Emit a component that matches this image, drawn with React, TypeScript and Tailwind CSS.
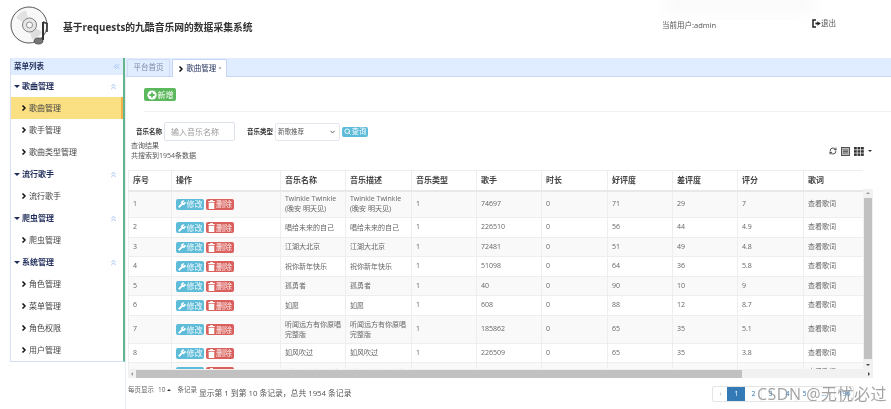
import { ChevronRight, ChevronsLeft, ChevronsUp, RefreshCw, Search, Wrench } from "lucide-react";

const menu = [
  { title: "歌曲管理", items: ["歌曲管理", "歌手管理", "歌曲类型管理"] },
  { title: "流行歌手", items: ["流行歌手"] },
  { title: "爬虫管理", items: ["爬虫管理"] },
  { title: "系统管理", items: ["角色管理", "菜单管理", "角色权限", "用户管理"] },
];

const columns = [
  { label: "序号", width: 43 },
  { label: "操作", width: 109 },
  { label: "音乐名称", width: 65 },
  { label: "音乐描述", width: 66 },
  { label: "音乐类型", width: 65 },
  { label: "歌手", width: 65 },
  { label: "时长", width: 66 },
  { label: "好评度", width: 65 },
  { label: "差评度", width: 65 },
  { label: "评分", width: 66 },
  { label: "歌词", width: 60 },
];

const rows = [
  { name: "Twinkle Twinkle (晚安 明天见)", singer: "74697", good: 71, bad: 29, score: "7", height: "h-[27px]" },
  { name: "唱给未来的自己", singer: "226510", good: 56, bad: 44, score: "4.9", height: "h-[20px]" },
  { name: "江湖大北京", singer: "72481", good: 51, bad: 49, score: "4.8", height: "h-[19px]" },
  { name: "祝你新年快乐", singer: "51098", good: 64, bad: 36, score: "5.8", height: "h-[20px]" },
  { name: "孤勇者", singer: "40", good: 90, bad: 10, score: "9", height: "h-[19px]" },
  { name: "如愿", singer: "608", good: 88, bad: 12, score: "8.7", height: "h-[20px]" },
  { name: "听闻远方有你原唱完整版", singer: "185862", good: 65, bad: 35, score: "5.1", height: "h-[28px]" },
  { name: "如风吹过", singer: "226509", good: 65, bad: 35, score: "3.8", height: "h-[19px]" },
  { name: "听闻远方有你女版", singer: "214757", good: 60, bad: 40, score: "6", height: "h-[20px]" },
];

const Logo = () => (
  <svg width="42" height="44" viewBox="0 0 42 44" fill="none">
    <circle cx="19" cy="21" r="18" fill="#f8f8f8" stroke="#444" strokeWidth="0.9" />
    <path d="M6 14 A15 15 0 0 1 16 6.5 L18 14 A7 7 0 0 0 12.5 18 Z" fill="#e2e2e2" />
    <path d="M32 28 A15 15 0 0 1 22 35.5 L20 28 A7 7 0 0 0 25.5 24 Z" fill="#dedede" />
    <circle cx="19.5" cy="21" r="7" fill="#e6e6e6" stroke="#666" strokeWidth="0.8" />
    <circle cx="19.5" cy="21" r="3" fill="#fafafa" stroke="#666" strokeWidth="0.7" />
    <path d="M33 18 V36" stroke="#333" strokeWidth="2" />
    <path d="M33 18 L37 19.5 V28" stroke="#333" strokeWidth="1.6" />
    <ellipse cx="28.5" cy="37" rx="4.4" ry="3" fill="#777" stroke="#333" strokeWidth="0.7" />
  </svg>
);

const PlusCircle = () => (
  <svg width="10" height="10" viewBox="0 0 10 10">
    <circle cx="5" cy="5" r="4.6" fill="#fff" />
    <path d="M5 2.4 V7.6 M2.4 5 H7.6" stroke="#5cb85c" strokeWidth="1.8" />
  </svg>
);

const TrashIcon = () => (
  <svg width="7" height="9" viewBox="0 0 7 9" fill="#fff">
    <path d="M2.2 0 H4.8 V1 H6.8 V2.1 H0.2 V1 H2.2 Z" />
    <path d="M0.7 2.7 H6.3 V9 H0.7 Z" />
  </svg>
);

const LogoutIcon = () => (
  <svg width="9" height="9" viewBox="0 0 9 9" fill="none" stroke="#222">
    <path d="M4 1 H1 V8 H4" strokeWidth="1.5" />
    <path d="M3.4 4.5 H6" strokeWidth="1.8" />
    <path d="M5.5 2.4 L8.6 4.5 L5.5 6.6 Z" fill="#222" strokeWidth="0.2" />
  </svg>
);

const CardIcon = () => (
  <svg width="9" height="9" viewBox="0 0 9 9" fill="#bbb" stroke="#444">
    <rect x="0.5" y="0.5" width="8" height="8" strokeWidth="0.9" />
    <path d="M2 3 H7 M2 4.5 H7 M2 6 H7" strokeWidth="0.7" />
  </svg>
);

const GridIcon = () => (
  <svg width="10" height="9" viewBox="0 0 10 9" fill="#333">
    {[0, 3.5, 7].map((x) =>
      [0, 3.2, 6.4].map((y) => <rect key={`${x}-${y}`} x={x} y={y} width="2.8" height="2.5" />),
    )}
  </svg>
);

const RowActions = () => (
  <div className="flex items-center gap-[2px]">
    <span className="flex h-[11px] w-[28px] items-center justify-center gap-[1px] rounded-[2px] bg-[#5fbcd9] text-[8px] leading-none text-white/90">
      <Wrench size={8} fill="#fff" color="#fff" strokeWidth={2} />
      修改
    </span>
    <span className="flex h-[11px] w-[28px] items-center justify-center gap-[1px] rounded-[2px] bg-[#d9605c] text-[8px] leading-none text-white/90">
      <TrashIcon />
      删除
    </span>
  </div>
);

const Sidebar = () => (
  <aside className="ml-[10px] h-[304px] w-[115px] shrink-0 border-r-2 border-l border-b border-r-[#62b58c] border-l-[#d5e0f5] border-b-[#d5e0f5] bg-white">
    <div className="flex h-[17px] items-center justify-between bg-[#e0ecff] pr-[2px] pl-[3px] text-[7.5px] font-bold text-[#1f2d5a]">
      菜单列表
      <ChevronsLeft size={9} color="#8fb4ee" strokeWidth={2.2} />
    </div>
    {menu.map((group) => (
      <div key={group.title}>
        <div className="flex h-[22px] items-center justify-between pr-[5px] pl-[3px] text-[8px] font-bold text-[#1f2d5a]">
          <span className="flex items-center gap-[2px]">
            <span className="h-0 w-0 border-x-[3.5px] border-t-[3.5px] border-x-transparent border-t-[#1f2d5a]" />
            {group.title}
          </span>
          <ChevronsUp size={9} color="#8fb4ee" strokeWidth={2.2} />
        </div>
        {group.items.map((item, index) => {
          const active = group.title === "歌曲管理" && index === 0;
          return (
            <div
              key={item}
              className={`flex h-[22px] items-center gap-[1px] pl-[9px] text-[8px] text-[#444] ${
                active ? "border-r-2 border-r-[#f4b04a] bg-[#fbe083]" : ""
              }`}
            >
              <ChevronRight size={8} color="#111" strokeWidth={5} />
              {item}
            </div>
          );
        })}
      </div>
    ))}
  </aside>
);

const Tabs = () => (
  <div className="flex h-[19px] shrink-0 items-end gap-[2px] border-b border-[#c5d5f2] bg-[#e0ecff] pl-[1px]">
    <div className="flex h-[17px] w-[43px] items-center justify-center rounded-t-[2px] border border-b-0 border-[#d0dcf5] text-[7.5px] text-[#7d8aa5]">
      平台首页
    </div>
    <div className="-mb-px flex h-[18px] w-[55px] items-center justify-center gap-[1px] rounded-t-[2px] border border-b-0 border-[#c5d5f2] bg-white text-[7.5px] text-[#1f2d5a]">
      <ChevronRight size={8} color="#111" strokeWidth={5} />
      歌曲管理
      <span className="ml-[1px] text-[6px] text-[#777]">×</span>
    </div>
  </div>
);

const SearchForm = () => (
  <div className="flex h-[19px] items-center pl-[10px] text-[6.5px] text-[#333]">
    <span className="w-[28px] font-bold">音乐名称</span>
    <span className="flex h-[19px] w-[71px] items-center rounded-[2px] border border-[#dde3ea] pl-[6px] text-[8px] text-[#999]">
      输入音乐名称
    </span>
    <span className="ml-[12px] w-[28px] font-bold">音乐类型</span>
    <span className="flex h-[18px] w-[65px] items-center justify-between rounded-[2px] border border-[#e4e8ee] pr-[4px] pl-[2px] text-[6.5px] text-[#555]">
      新歌推荐
      <svg width="5" height="4" viewBox="0 0 5 4" fill="none" stroke="#444">
        <path d="M0.5 0.8 L2.5 3 L4.5 0.8" strokeWidth="0.8" />
      </svg>
    </span>
    <span className="ml-[2px] flex h-[10px] w-[26px] items-center justify-center gap-[1px] rounded-[2px] bg-[#5fbcd9] text-[7.5px] text-white/90">
      <Search size={7} color="#fff" strokeWidth={3} />
      查询
    </span>
  </div>
);

const DataTable = () => (
  <div className="mt-[9px] ml-[2px] flex h-[208px] w-[745px] flex-col">
    <div className="flex h-[199px]">
      <div className="h-full w-[735px] overflow-hidden">
        <table className="w-[735px] table-fixed border-collapse text-left text-[7px] text-[#666]">
          <colgroup>
            {columns.map((col) => (
              <col key={col.label} width={col.width} />
            ))}
          </colgroup>
          <thead>
            <tr className="h-[20px] border-b-2 border-[#e8e8e8]">
              {columns.map((col) => (
                <th key={col.label} className="border-x border-t border-[#eee] pl-[4px] text-[8px] font-bold text-[#444]">
                  {col.label}
                </th>
              ))}
            </tr>
          </thead>
          <tbody>
            {rows.map((row, index) => (
              <tr key={row.singer} className={`${row.height} ${index % 2 === 0 ? "bg-[#f9f9f9]" : "bg-white"}`}>
                <td className="border border-[#eee] pl-[4px]">{index + 1}</td>
                <td className="border border-[#eee] pl-[4px]">
                  <RowActions />
                </td>
                <td className="border border-[#eee] pl-[4px] leading-[10px]">{row.name}</td>
                <td className="border border-[#eee] pl-[4px] leading-[10px]">{row.name}</td>
                <td className="border border-[#eee] pl-[4px]">1</td>
                <td className="border border-[#eee] pl-[4px]">{row.singer}</td>
                <td className="border border-[#eee] pl-[4px]">0</td>
                <td className="border border-[#eee] pl-[4px]">{row.good}</td>
                <td className="border border-[#eee] pl-[4px]">{row.bad}</td>
                <td className="border border-[#eee] pl-[4px]">{row.score}</td>
                <td className="border border-[#eee] pl-[4px]">查看歌词</td>
              </tr>
            ))}
          </tbody>
        </table>
      </div>
      {/* vertical scrollbar, starts under the table header */}
      <div className="mt-[19px] flex w-[10px] flex-col items-center bg-[#f1f1f1]">
        <span className="mt-[3px] h-0 w-0 border-x-[2px] border-b-[2px] border-x-transparent border-b-[#999]" />
        <div className="mt-[4px] h-[161px] w-[8px] bg-[#c1c1c1]" />
        <span className="mt-auto mb-[3px] h-0 w-0 border-x-[2px] border-t-[2px] border-x-transparent border-t-[#444]" />
      </div>
    </div>
    <div className="flex h-[9px] items-center bg-[#f1f1f1]">
      <span className="mx-[3px] h-0 w-0 border-y-[2px] border-r-[2px] border-y-transparent border-r-[#999]" />
      <div className="h-[8px] w-[606px] bg-[#c1c1c1]" />
      <span className="mr-[3px] ml-auto h-0 w-0 border-y-[2px] border-l-[2px] border-y-transparent border-l-[#444]" />
    </div>
  </div>
);

const Pagination = () => (
  <div className="flex h-[16px] items-center rounded-[2px] border border-[#e5e5e5] text-[7px] text-[#337ab7]">
    <span className="flex h-full w-[14px] items-center justify-center text-[#aaa]">‹</span>
    <span className="flex h-full w-[18px] items-center justify-center bg-[#337ab7] text-white">1</span>
    {["2", "3", "4", "5"].map((page) => (
      <span key={page} className="flex h-full w-[17px] items-center justify-center border-r border-[#eee]">
        {page}
      </span>
    ))}
    <span className="flex h-full w-[22px] items-center justify-center border-r border-[#eee]">...</span>
    <span className="flex h-full w-[18px] items-center justify-center">196</span>
  </div>
);

export default function App() {
  return (
    <div className="relative flex h-[409px] w-[891px] flex-col overflow-hidden bg-white blur-[0.35px] [font-family:'Open_Sans','Noto_Sans_CJK_SC',sans-serif]">
      {/* faint shade at the top of the header */}
      <div className="absolute top-0 left-[665px] h-[14px] w-[150px] bg-linear-to-b from-[#f1f1f1] to-white blur-sm" />
      <header className="relative flex h-[58px] shrink-0 items-start">
        <div className="mt-[4px] ml-[10px]">
          <Logo />
        </div>
        <h1 className="mt-[21px] ml-[11px] w-[599px] text-[9.8px] font-bold text-[#333]">
          基于requests的九酷音乐网的数据采集系统
        </h1>
        <span className="mt-[20px] w-[150px] text-[7.5px] text-[#555]">当前用户:admin</span>
        <span className="mt-[18px] flex items-center text-[7.5px] text-[#555]">
          <LogoutIcon />
          退出
        </span>
      </header>

      <div className="flex min-h-0 flex-1">
        <Sidebar />
        <main className="flex min-w-0 flex-1 flex-col border-l border-[#e8eef8]">
          <Tabs />
          <div className="pt-[11px] pl-[18px]">
            <span className="flex h-[13px] w-[32px] items-center justify-center gap-[1px] rounded-[2px] bg-[#5cb85c] text-[8px] text-white">
              <PlusCircle />
              新增
            </span>
          </div>
          <div className="mt-[10px] ml-[18px] h-px bg-[#f1f1f1]" />
          <div className="mt-[10px]">
            <SearchForm />
          </div>
          <div className="flex items-center justify-between pr-[19px] pl-[5px] text-[7px] leading-[10px] text-[#555]">
            <div>
              <div>查询结果</div>
              <div>共搜索到1954条数据</div>
            </div>
            <div className="flex items-center gap-[4px]">
              <RefreshCw size={8} color="#333" strokeWidth={2.5} />
              <CardIcon />
              <GridIcon />
              <span className="h-0 w-0 border-x-[2px] border-t-[2px] border-x-transparent border-t-[#333]" />
            </div>
          </div>
          <DataTable />
          <div className="flex items-start pt-[7px] pl-[2px]">
            <div className="flex items-center gap-[4px] text-[6.5px] text-[#666]">
              每页显示
              <span className="flex items-center gap-[2px]">
                10
                <span className="h-0 w-0 border-x-[2px] border-b-[2px] border-x-transparent border-b-[#333]" />
              </span>
              <span className="ml-[2px]">条记录</span>
            </div>
            <span className="mt-[3px] ml-[2px] text-[7.8px] text-[#555]">显示第 1 到第 10 条记录，总共 1954 条记录</span>
            <div className="mt-[1px] ml-[361px]">
              <Pagination />
            </div>
          </div>
        </main>
      </div>

      {/* watermark over the pagination */}
      <div className="absolute right-[4px] bottom-[5px] text-[16px] leading-[20px] tracking-[0.5px] text-[#8d8d8d]/80">
        CSDN @无忧必过
      </div>
    </div>
  );
}
